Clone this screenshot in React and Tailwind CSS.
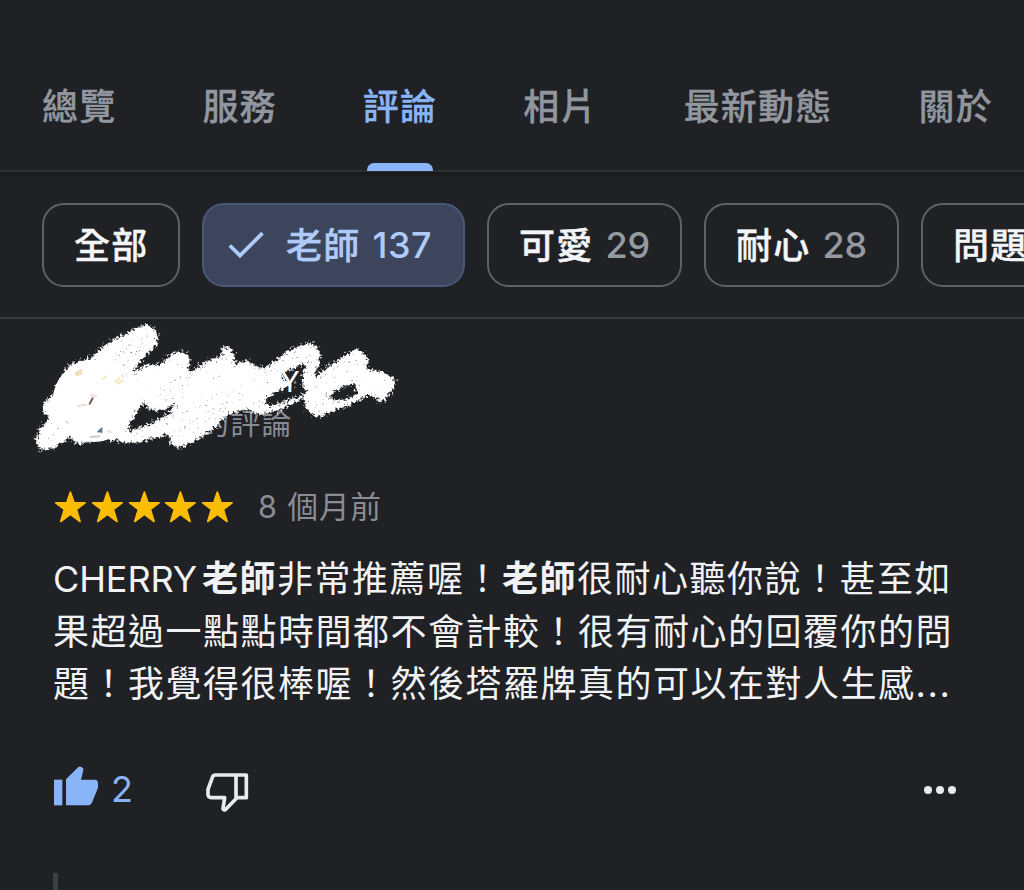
import React from 'react';

const tabs = ['總覽', '服務', '評論', '相片', '最新動態', '關於'];

const chips = [
  { label: '全部', width: 'w-[138px]' },
  { label: '老師', count: 137, width: 'w-[263px]', selected: true },
  { label: '可愛', count: 29, width: 'w-[195px]' },
  { label: '耐心', count: 28, width: 'w-[195px]' },
  { label: '問題', width: 'w-[195px]' },
];

const Tabs = () => (
  <nav className="flex h-[172px] gap-[86px] border-b-2 border-[#2e2f33] pl-[42px] pt-[80px] shadow-[0_2px_5px_rgba(20,16,16,0.6)]">
    {tabs.map((tab) => {
      const active = tab === '評論';
      return (
        <div key={tab} className="flex shrink-0 flex-col justify-between">
          <span
            className={`text-[36px] font-medium leading-[54px] tracking-[1.2px] [-webkit-text-stroke:0.3px] ${
              active ? 'text-[#8ab4f8]' : 'text-[#92969f]'
            }`}
          >
            {tab}
          </span>
          {active && <div className="-mb-px ml-1 h-2 w-[66px] rounded-t-[7px] bg-[#8ab4f8]" />}
        </div>
      );
    })}
  </nav>
);

const Chip = ({ label, count, width, selected }) => (
  <button
    className={`flex h-[84px] shrink-0 items-center rounded-[22px] border-[2.5px] text-[36px] font-medium tracking-[1.2px] ${width} ${
      selected
        ? 'border-[#495879] bg-[#3c455b] pl-6 text-[#aecbfa]'
        : 'border-[#5f6165] pl-[30px] text-[#f4f5f7]'
    }`}
  >
    {selected && (
      <svg viewBox="0 0 36 28" className="mr-[22px] h-7 w-9 shrink-0" fill="none" stroke="currentColor" strokeWidth="3.8">
        <path d="M1.8 14.5 12 24.5 34.5 2.2" />
      </svg>
    )}
    <span className="pt-px [-webkit-text-stroke:0.4px]">{label}</span>
    {count && (
      <span className={`ml-3 ${selected ? 'tracking-[0.6px]' : 'tracking-[0px] text-[#9599a0]'}`}>{count}</span>
    )}
  </button>
);

const Scribble = () => (
  <svg viewBox="0 0 1170 435" className="absolute left-0 top-0 h-[145px] w-[390px]">
    <defs>
      <filter id="chalk" x="0" y="0" width="1170" height="435" filterUnits="userSpaceOnUse" colorInterpolationFilters="sRGB">
        <feGaussianBlur in="SourceGraphic" stdDeviation="7" result="soft" />
        <feMorphology in="SourceGraphic" operator="dilate" radius="9" result="area" />
        <feTurbulence type="fractalNoise" baseFrequency="0.13" numOctaves="3" seed="4" />
        <feColorMatrix values="0 0 0 0 1  0 0 0 0 1  0 0 0 0 1  0 0 0 1 0" result="noise" />
        <feComposite in="soft" in2="noise" operator="arithmetic" k2="1" k3="1.5" k4="-0.75" />
        <feColorMatrix values="0 0 0 0 1  0 0 0 0 1  0 0 0 0 1  0 0 0 2.8 -0.8" result="grain" />
        <feComposite in="grain" in2="area" operator="in" />
      </filter>
    </defs>
    <circle cx="221" cy="258" r="123" fill="#fff" />
    <path
      filter="url(#chalk)"
      fill="#fff"
      fillRule="evenodd"
      d="M380 28 412 50 412 85 370 130 330 178 348 172 375 150 420 150 455 118 490 108 512 135 500 178 560 140 606 122 608 95 630 98 645 125 638 155 675 135 715 158 740 158 800 110 870 82 900 110 895 150 878 194 925 155 980 120 1010 100 1045 130 1040 165 1090 172 1126 195 1120 225 1085 262 1050 238 1000 265 930 290 895 308 860 282 852 248 780 285 720 298 680 282 620 300 580 340 530 375 480 398 450 385 450 356 400 368 340 385 292 378 260 370 170 387 150 365 100 400 60 405 48 375 60 340 90 312 68 285 75 255 105 240 115 200 150 150 215 128 250 95 290 70 340 45z
        M316 352 343 300 372 262 394 288 432 284 476 258 448 296 390 328z
        M730 254 788 220 846 200 862 234 800 258 748 276z
        M776 180 820 160 858 140 846 202 812 206z
        M918 250 965 216 1006 204 1012 240 960 258z"
    />
    <g fill="none" stroke="#202125" strokeWidth="3" strokeLinecap="round" strokeDasharray="1 17 2 29 1 12 3 38" opacity=".45">
      <path d="M285 135 330 90 385 62M310 150 360 105M85 370 120 345 108 335M420 240 455 200 490 185M440 255 480 245M500 190 545 160 610 130" />
      <path d="M480 350 545 300 620 262 660 255M520 352 590 290 640 270M350 355 420 315 470 300 540 275M580 190 600 183M770 140 870 120 860 165" />
      <path d="M700 265 780 235 820 240M740 180 770 150M900 190 960 150 1015 135M890 270 950 262 1010 235M1080 210 1100 190M1000 205 1050 225" />
    </g>
    <g strokeLinecap="round" strokeWidth="6" opacity=".75">
      <path d="M168 174 185 166M170 180 184 175" stroke="#ead093" />
      <path d="M250 192 256 184M286 200 298 190M292 206 308 196M307 180V186" stroke="#f4e0a8" />
      <path d="M175 274 188 270 199 270M212 240 228 244" stroke="#ecd2c6" />
      <path d="M209 266 218 250" stroke="#353034" />
      <path d="M235 350 244 342 244 352" stroke="#26466e" />
      <path d="M212 366 238 364" stroke="#c9b9b2" />
      <path d="M264 348 273 352M138 320 145 324" stroke="#d5dae2" />
    </g>
  </svg>
);

const Star = () => (
  <svg viewBox="0 0 110 110" className="h-[36.8px] w-[36.8px]" fill="#fbbc04" stroke="#fbbc04" strokeWidth="5" strokeLinejoin="round">
    <path d="M55 9 66 41H99L73 61 84 97 55 76 26 97 37 61 11 41H44z" />
  </svg>
);

const ThumbUp = () => (
  <svg viewBox="0 0 132 120" className="mb-1 h-10 w-11" fill="#8ab4f8">
    <path d="M0 41H25V118H0z" />
    <path d="M36 118V40L73 3Q79-1 87 7 89 10 87 17L81 41H123Q132 42 132 52V65L115 107Q111 118 101 118z" />
  </svg>
);

const ThumbDown = () => (
  <svg viewBox="0 0 129 120" className="h-10 w-[43px]" fill="none" stroke="#e8eaed" strokeWidth="11" strokeLinejoin="round">
    <path d="M121 6H28Q22 6 20 11L6 49V65Q7 74 16 74H56L51 107Q53 113 58 110L93 74H121zM90 6V76" />
  </svg>
);

const Review = () => (
  <article>
    <div className="relative -mt-1 ml-5 h-36 w-[390px]">
      <div className="flex pl-[260px] pt-[49px] text-[29px] leading-[36px] text-white">
        <span className="relative z-10">Y</span>
        <span className="relative z-10 ml-[64px]">H</span>
      </div>
      <div className="pl-[179px] pt-[1px] text-[30px] leading-[44px] tracking-[1.2px] text-[#888c92]">的評論</div>
      <Scribble />
    </div>

    <div className="mt-[29px] flex h-[38px] items-center pl-[52px]">
      {[1, 2, 3, 4, 5].map((n) => (
        <Star key={n} />
      ))}
      <span className="ml-[22px] whitespace-pre text-[30.5px] tracking-[1px] text-[#8a8d93]">8 個月前</span>
    </div>

    <p className="mt-[27px] whitespace-nowrap pl-[53px] text-[36px] leading-[52.6px] tracking-[1.5px] text-[#f1f2f4]">
      <span className="mr-[5px] tracking-[-0.1px]">CHERRY</span>
      <b>老師</b>非常推薦喔！<b>老師</b>很耐心聽你說！甚至如
      <br />
      果超過一點點時間都不會計較！很有耐心的回覆你的問
      <br />
      題！我覺得很棒喔！然後塔羅牌真的可以在對人生感<span className="tracking-[1.6px]">...</span>
    </p>

    <div className="mt-[52px] flex h-[50px] items-center pl-[54px] pr-[68px]">
      <ThumbUp />
      <span className="ml-[13px] w-[95px] pt-0.5 text-[36px] text-[#8ab4f8]">2</span>
      <div className="pt-[10px]">
        <ThumbDown />
      </div>
      <div className="ml-auto flex gap-1 pt-[4px]">
        <i className="size-2 rounded-full bg-[#e8eaed]" />
        <i className="size-2 rounded-full bg-[#e8eaed]" />
        <i className="size-2 rounded-full bg-[#e8eaed]" />
      </div>
    </div>
    <div className="ml-[53px] mt-[60px] h-[20px] w-[5px] bg-[#3c4043]" />
  </article>
);

const App = () => (
  <main className="h-[890px] w-[1024px] overflow-hidden bg-[#202125] font-[Inter,'Noto_Sans_CJK_TC',sans-serif]">
    <Tabs />
    <div className="flex h-[147px] gap-[22px] overflow-hidden border-b-2 border-[#3a3b3f] pl-[42px] pt-[31px]">
      {chips.map((chip) => (
        <Chip key={chip.label} {...chip} />
      ))}
    </div>
    <Review />
  </main>
);

export default App;
